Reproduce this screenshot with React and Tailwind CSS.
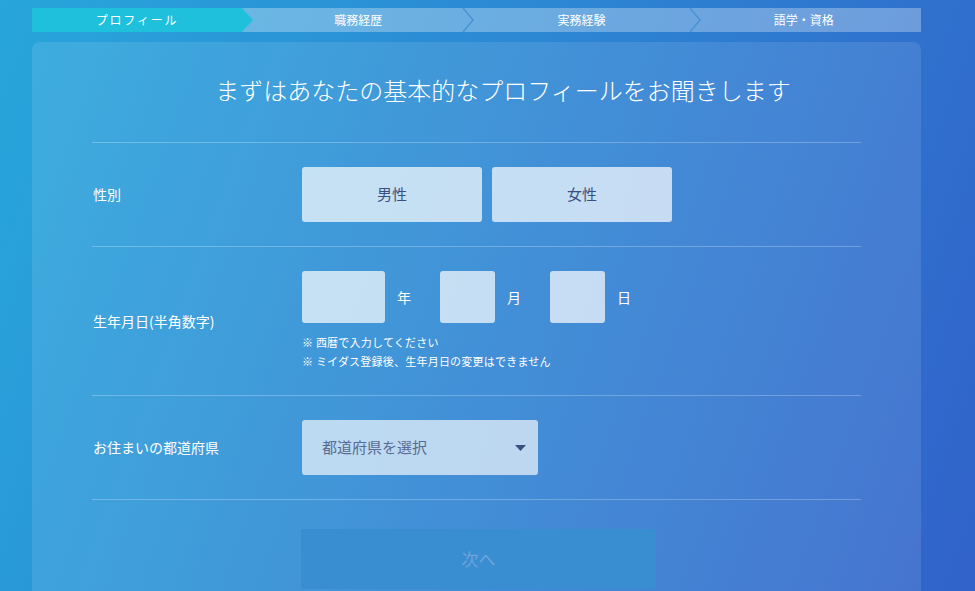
const steps = ['プロフィール', '職務経歴', '実務経験', '語学・資格'];
const stepPad = ['', 'pl-[6px]', '', 'pr-[8px]'];

const font = { fontFamily: '"Noto Sans CJK JP", "Noto Sans", sans-serif' };

function StepBar() {
  return (
    <div className="flex h-6 bg-white/30 text-[12px] text-white">
      {steps.map((s, i) =>
        i === 0 ? (
          <div
            key={s}
            className="relative z-10 -mr-[11px] flex w-[221px] items-center bg-[#1fc0dc] [clip-path:polygon(0_0,calc(100%-11px)_0,100%_50%,calc(100%-11px)_100%,0_100%)]"
          >
            <span className="w-[210px] text-center tracking-[0.15em]">{s}</span>
          </div>
        ) : (
          <div key={s} className="relative flex flex-1 items-center justify-center">
            <span className={stepPad[i]}>{s}</span>
            {i < steps.length - 1 && (
              <svg className="absolute -right-[6px] top-0" width="12" height="24" viewBox="0 0 12 24">
                <path d="M1 0 L11 12 L1 24" fill="none" stroke="#4b93d6" strokeWidth="1.5" />
              </svg>
            )}
          </div>
        )
      )}
    </div>
  );
}

function Row({ label, children }) {
  return (
    <div className="flex items-center border-t border-white/25 py-6">
      <div className="w-[210px] shrink-0 pl-px text-[14px] text-white">{label}</div>
      <div>{children}</div>
    </div>
  );
}

export default function App() {
  return (
    <div
      className="min-h-screen overflow-hidden bg-linear-110 from-[#27a6db] to-[#3161c9] pt-2"
      style={font}
    >
      <div className="ml-8 w-[889px]">
        <StepBar />
        <div className="mt-2.5 h-[600px] rounded-lg bg-white/10 px-[60px] pt-[30px]">
          <h1 className="mb-[34px] pl-[53px] text-center text-[24px] font-light leading-9 text-white">
            まずはあなたの基本的なプロフィールをお聞きします
          </h1>

          <Row label="性別">
            <div className="flex gap-2.5">
              <button className="h-[55px] w-[180px] rounded-[3px] bg-white/70 text-[15px] text-[#3b4f7e]">男性</button>
              <button className="h-[55px] w-[180px] rounded-[3px] bg-white/70 text-[15px] text-[#3b4f7e]">女性</button>
            </div>
          </Row>

          <Row label="生年月日(半角数字)">
            <div className="flex items-center text-[14px] text-white">
              <div className="h-[52px] w-[83px] rounded-[3px] bg-white/70" />
              <span className="ml-3 mr-[29px]">年</span>
              <div className="h-[52px] w-[55px] rounded-[3px] bg-white/70" />
              <span className="ml-3 mr-[29px]">月</span>
              <div className="h-[52px] w-[55px] rounded-[3px] bg-white/70" />
              <span className="ml-3">日</span>
            </div>
            <div className="mt-2.5 text-[11px] leading-[19px] tracking-[0.02em] text-white">
              <p>※ 西暦で入力してください</p>
              <p>※ ミイダス登録後、生年月日の変更はできません</p>
            </div>
          </Row>

          <Row label="お住まいの都道府県">
            <div className="flex h-[55px] w-[236px] items-center justify-between rounded-[3px] bg-white/65 pl-5 pr-3 text-[15px] text-[#5b6a92]">
              <span>都道府県を選択</span>
              <svg width="11" height="6" viewBox="0 0 11 6">
                <path d="M0 0 H11 L5.5 6 Z" fill="#3b4f7e" />
              </svg>
            </div>
          </Row>

          <div className="border-t border-white/25 pt-[29px]">
            <button className="ml-[209px] h-[60px] w-[355px] rounded-[3px] bg-[#398dd1] text-[17px] text-[#6fa3de]">
              次へ
            </button>
          </div>
        </div>
      </div>
    </div>
  );
}
